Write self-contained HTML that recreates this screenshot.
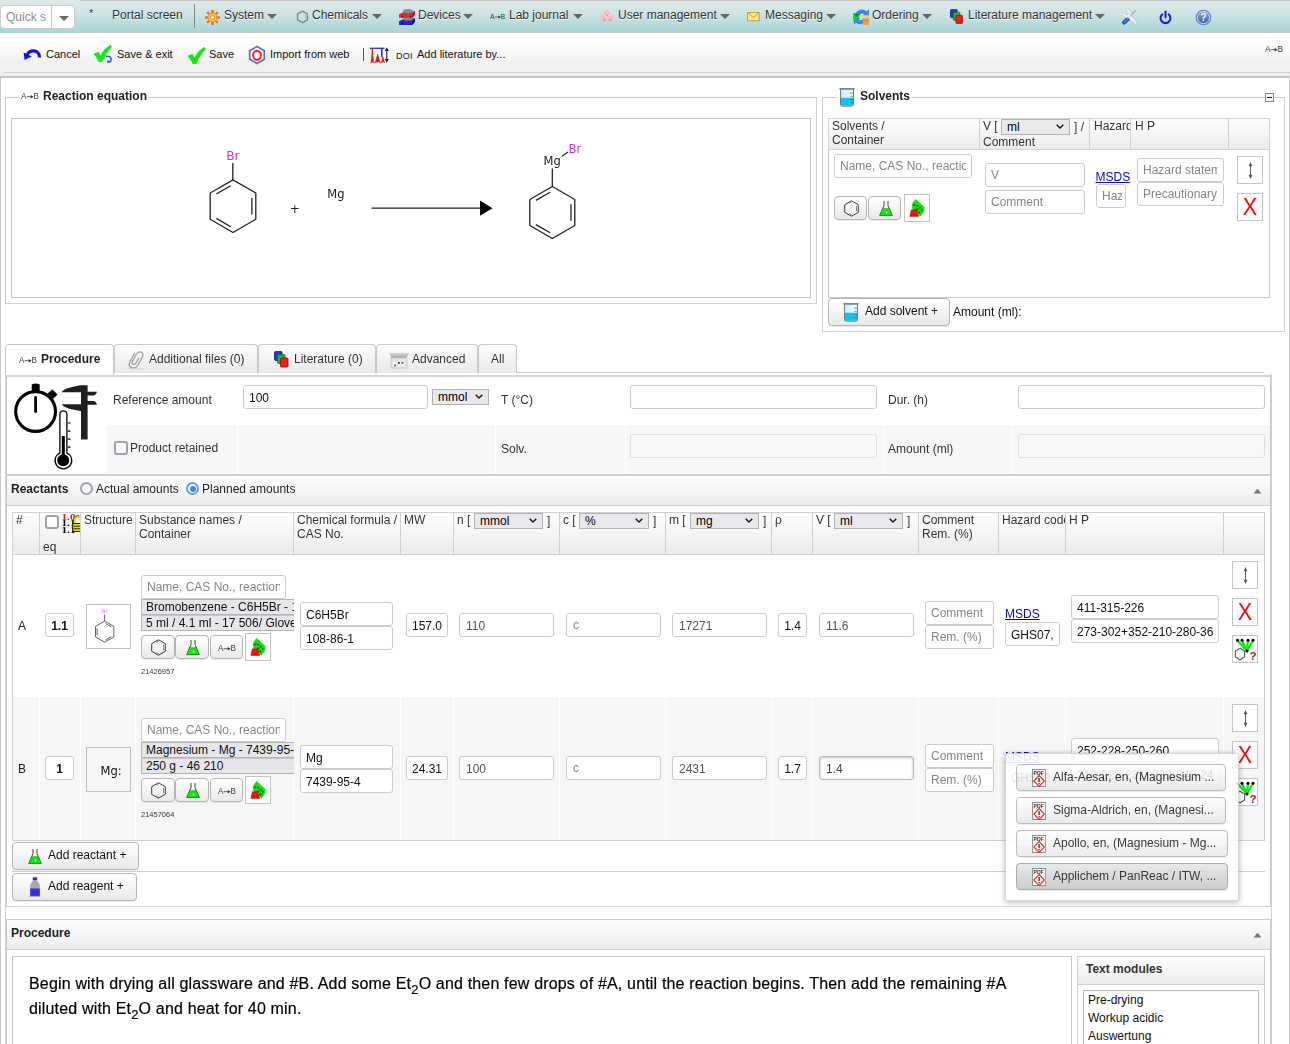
<!DOCTYPE html>
<html lang="en">
<head>
<meta charset="utf-8">
<title>Lab journal</title>
<style>
*{box-sizing:border-box;margin:0;padding:0}
html,body{width:1290px;height:1044px;overflow:hidden;background:#fff}
body{position:relative;font-family:"Liberation Sans",Arial,sans-serif;font-size:12px;color:#222;line-height:14px}
.abs{position:absolute}
.t{position:absolute;white-space:nowrap}
/* top nav */
#nav{position:absolute;left:0;top:0;width:1290px;height:33px;background:linear-gradient(#dfeaea 0%,#cfe3e3 40%,#a6d5d6 100%)}
#navline{position:absolute;left:80px;top:0;width:1210px;height:33px;border-top:1px solid #c4c4c4;border-bottom:1px solid #c9c9c9}
#navitems .t{top:8px;font-size:12px;color:#333;text-shadow:0 1px 0 rgba(255,255,255,.85)}
.caret{position:absolute;top:14px;width:0;height:0;border-left:5px solid transparent;border-right:5px solid transparent;border-top:5px solid #666}
#qs{position:absolute;left:0;top:5px;width:75px;height:24px;background:#fff;border:1px solid #ccc;border-radius:4px}
/* toolbar */
#tb{position:absolute;left:0;top:33px;width:1290px;height:44px;background:linear-gradient(#ffffff 0%,#fbfbfb 30%,#f1f1f1 65%,#eeeeee 100%)}
#tb .t{top:14px;font-size:11px;color:#111}
/* generic */
.inp{position:absolute;height:23px;border:1px solid #ccc;border-radius:3px;background:#fff;font-size:12px;line-height:21px;padding:1px 5px 0 5px;white-space:nowrap;overflow:hidden;color:#222}
.inp.ph{padding-top:0}
.inp .v{display:block;overflow:hidden;height:100%}
.ph{color:#858585}
.btn{position:absolute;border:1px solid #b4b4b4;border-radius:4px;background:linear-gradient(#ffffff,#e9e9e9);box-shadow:0 1px 0 rgba(0,0,0,.08)}
.sel{position:absolute;height:16px;border:1px solid #b2b2b2;background:#e9e9ed;font-size:12px;line-height:14px;padding-left:5px;color:#000}
.sel svg{position:absolute;right:5px;top:5px}
.ibox{position:absolute;border:1px solid #c8c8c8;background:#fff}
.hdr{position:absolute;background:linear-gradient(#fdfdfd,#ececec);border:1px solid #d3d3d3}
.th{position:absolute;top:0;height:100%;border-left:1px solid #d0d0d0;padding:0 0 0 3px;font-size:12px;line-height:14px;color:#333;overflow:hidden;white-space:nowrap}
a.msds{position:absolute;color:#0000ee;text-decoration:underline;font-size:12px}
</style>
</head>
<body><div id="wrap" style="position:absolute;left:0;top:0;width:1290px;height:1044px;overflow:hidden;opacity:0.9999">
<!-- NAV -->
<div id="nav"></div><div id="navline"></div>
<div id="qs"><span class="t ph" style="left:5px;top:4px;font-size:12px;color:#8c8c8c">Quick s</span><span class="abs" style="left:50px;top:0;width:1px;height:22px;background:#ccc"></span><span class="caret" style="left:58px;top:10px"></span></div>
<div id="navitems" class="abs" style="left:0;top:0"><span class="t" style="left:89px;top:6px;font-size:11px">*</span><span class="t" style="left:112px">Portal screen</span><span class="abs" style="left:194px;top:4px;width:1px;height:24px;background:#7d8c8c"></span><svg class="abs" style="left:205.400px;top:10px" width="15" height="15" viewBox="0 0 15 15"><defs><radialGradient id="gg" cx="0.5" cy="0.5" r="0.5"><stop offset="0" stop-color="#fff27a"/><stop offset="0.45" stop-color="#ffd21e"/><stop offset="0.75" stop-color="#ff8a10"/><stop offset="1" stop-color="#dc3c08"/></radialGradient></defs><path d="M6.65 0.35L8.35 0.35L8.24 3.26L9.97 3.98L11.96 1.85L13.15 3.04L11.02 5.03L11.74 6.76L14.65 6.65L14.65 8.35L11.74 8.24L11.02 9.97L13.15 11.96L11.96 13.15L9.97 11.02L8.24 11.74L8.35 14.65L6.65 14.65L6.76 11.74L5.03 11.02L3.04 13.15L1.85 11.96L3.98 9.97L3.26 8.24L0.35 8.35L0.35 6.65L3.26 6.76L3.98 5.03L1.85 3.04L3.04 1.85L5.03 3.98L6.76 3.26Z" fill="url(#gg)" stroke="#e05a10" stroke-width="0.6" stroke-linejoin="round"/><circle cx="7.5" cy="7.5" r="2" fill="#fff4f4" stroke="#f07010" stroke-width="0.9"/></svg><span class="t" style="left:224px">System</span><span class="caret" style="left:267px;top:14px"></span><svg class="abs" style="left:296px;top:10px" width="13" height="14" viewBox="0 0 14 15"><path d="M7 1.200L12.300 4.200V10.500L7 13.600L1.700 10.500V4.200Z" fill="none" stroke="#7d8a8a" stroke-width="1.500"/><path d="M10.300 5.300V9.500" stroke="#9aa" stroke-width="0.800"/></svg><span class="t" style="left:312px">Chemicals</span><span class="caret" style="left:372px;top:14px"></span><svg class="abs" style="left:398px;top:8px" width="18" height="18" viewBox="398 8 18 18"><path d="M399 21.300L403 19.300L415 18.300V21.500L412.300 25H399Z" fill="#2020e8"/><path d="M412.300 21.500L415 18.300V21.500L412.300 25Z" fill="#1010a8"/><ellipse cx="408" cy="19.300" rx="4.600" ry="2" fill="#5c5c5c"/><ellipse cx="408" cy="18.700" rx="4.600" ry="1.600" fill="#858585"/><path d="M399 14.300L403 12.200L415 11V14.200L412.300 18H399Z" fill="#f02828"/><path d="M412.300 14.500L415 11V14.200L412.300 18Z" fill="#b81010"/><ellipse cx="408" cy="12" rx="4.900" ry="2.600" fill="#555"/><ellipse cx="408" cy="11.200" rx="4.900" ry="2.200" fill="#8c8c8c"/><circle cx="402.300" cy="16.200" r="0.750" fill="#300"/><circle cx="410.600" cy="16.200" r="0.750" fill="#300"/><circle cx="402.300" cy="23.400" r="0.750" fill="#003"/><circle cx="410.600" cy="23.400" r="0.750" fill="#003"/></svg><span class="t" style="left:418px">Devices</span><span class="caret" style="left:463px;top:14px"></span><svg class="abs" style="left:490px;top:13px" width="16.0" height="8.0" viewBox="0 0 16 8"><text x="0" y="6.300" font-family="Liberation Sans,sans-serif" font-size="7" fill="#3a3a3a">A</text><path d="M4.800 4H9.500" stroke="#555" stroke-width="0.800"/><path d="M8.300 2.500L10.800 4L8.300 5.500Z" fill="#333"/><text x="10.600" y="6.300" font-family="Liberation Sans,sans-serif" font-size="7" fill="#3a3a3a">B</text></svg><span class="t" style="left:509px">Lab journal</span><span class="caret" style="left:573px;top:14px"></span><svg class="abs" style="left:600px;top:9px" width="16" height="15" viewBox="600 9 16 15"><g fill="#fcc3c7"><circle cx="606.900" cy="13.600" r="3.500"/><circle cx="603.800" cy="18.400" r="3.700"/><circle cx="610.300" cy="18.400" r="3.700"/></g><g fill="#8a6a70"><circle cx="605.500" cy="13.400" r="0.450"/><circle cx="608.300" cy="13.400" r="0.450"/><circle cx="607.300" cy="15.500" r="0.500"/><circle cx="603.400" cy="17.500" r="0.450"/><circle cx="611.400" cy="17.500" r="0.450"/></g><path d="M603 20H606M608.500 20H611.500" stroke="#a88088" stroke-width="0.900"/></svg><span class="t" style="left:618px">User management</span><span class="caret" style="left:720px;top:14px"></span><svg class="abs" style="left:747px;top:12px" width="13" height="9.500" viewBox="0 0 15 11"><rect x="0.700" y="0.700" width="13.400" height="9.400" fill="#fbe88a" stroke="#b59a1c" stroke-width="1"/><path d="M1 1L7.400 6.300L13.800 1" fill="none" stroke="#b59a1c" stroke-width="1"/></svg><span class="t" style="left:765px">Messaging</span><span class="caret" style="left:826px;top:14px"></span><svg class="abs" style="left:852px;top:8px" width="18" height="18" viewBox="852 8 18 18"><path d="M866 19.500C864 24.300 858.500 24.800 856 22.200L854.300 23.800V18.300H859.800L858.200 19.900C859.600 21.300 862.300 21 863.400 19Z" fill="#2f8cf0" stroke="#1b5aa8" stroke-width="0.500"/><path d="M853 13.300L862.300 12.500L853.400 22Z" fill="#00e400"/><path d="M855 14.500L858 14L856 17ZM857.500 16.500L859.500 15L858 18Z" fill="#067a06"/><path d="M855.800 13.800C857.800 9.300 864 8.800 866.600 12L868.600 9.800V16.200H862.300L864.500 14.100C863 12.500 860 12.500 858.600 14.800Z" fill="#2f8cf0" stroke="#1b5aa8" stroke-width="0.500"/><rect x="862.800" y="16.500" width="6.200" height="8.500" fill="#e9a23c"/><rect x="861.800" y="15.300" width="7.200" height="2.800" fill="#f6cf96"/><path d="M862.800 20.500H869" stroke="#c8821a" stroke-width="0.800"/></svg><span class="t" style="left:872px">Ordering</span><span class="caret" style="left:922px;top:14px"></span><svg class="abs" style="left:950px;top:9px" width="13.5" height="15.3" viewBox="0 0 15 17"><rect x="0.500" y="0.500" width="7.500" height="9" rx="1" fill="#1f35d8" stroke="#0b1a80" stroke-width="0.800"/><rect x="3.500" y="3.500" width="7.500" height="9" rx="1" fill="#1fb52a" stroke="#0c6a12" stroke-width="0.800"/><rect x="6.500" y="7" width="7.500" height="9" rx="1" fill="#ee1c1c" stroke="#8a0b0b" stroke-width="0.800"/></svg><span class="t" style="left:968px">Literature management</span><span class="caret" style="left:1095px;top:14px"></span><svg class="abs" style="left:1121.500px;top:9px" width="16" height="16" viewBox="0 0 16 16"><path d="M7 8L13.300 1.800" stroke="#9db2d2" stroke-width="1.700" stroke-linecap="round"/><path d="M12.300 1.300L14 0.800L14.500 2.800" fill="#b8c8e0"/><path d="M2.200 13.600L6.600 9.200" stroke="#2f62b4" stroke-width="4.300" stroke-linecap="round"/><path d="M2.600 12.800L6 9.400" stroke="#5a8ad8" stroke-width="1.200" stroke-linecap="round"/><path d="M6.800 6.600L13.200 13.300" stroke="#b4b4b4" stroke-width="4" stroke-linecap="round"/><path d="M6.800 6.600L13.200 13.300" stroke="#ececec" stroke-width="3" stroke-linecap="round"/><path d="M5.600 1.200A3.200 3.200 0 1 1 1.400 5.300" fill="none" stroke="#bdbdbd" stroke-width="3.200" stroke-linecap="round"/><path d="M5.600 1.200A3.200 3.200 0 1 1 1.400 5.300" fill="none" stroke="#f2f2f2" stroke-width="2.200" stroke-linecap="round"/></svg><svg class="abs" style="left:1157.500px;top:9.500px" width="15" height="16" viewBox="0 0 16 17"><path d="M4.600 4.600a5.300 5.300 0 1 0 6.800 0" fill="none" stroke="#1b1be6" stroke-width="2.200" stroke-linecap="round"/><path d="M8 1.500V8" stroke="#1b1be6" stroke-width="2.200" stroke-linecap="round"/></svg><svg class="abs" style="left:1194.500px;top:8.500px" width="17" height="17" viewBox="0 0 18 18"><defs><linearGradient id="hg" x1="0" y1="0" x2="0" y2="1"><stop offset="0" stop-color="#8aa6d8"/><stop offset="1" stop-color="#3a5ca6"/></linearGradient></defs><circle cx="9" cy="9" r="8.300" fill="#6482c0"/><circle cx="9" cy="9" r="6.500" fill="url(#hg)" stroke="#e4ecf8" stroke-width="0.900"/><text x="9" y="13" text-anchor="middle" font-family="Liberation Sans,sans-serif" font-weight="bold" font-size="11" fill="#f2f6fc">?</text></svg></div>
<!-- TOOLBAR -->
<div id="tb"><span class="abs" style="left:4px;top:39px;width:1286px;height:1px;background:#d4d4d4"></span><svg class="abs" style="left:22px;top:13px" width="22" height="16" viewBox="22 46 22 16"><path d="M39.500 57.500C39.500 53 36.500 50.800 33.300 50.800C30.500 50.800 28.300 52.300 27.300 54.600" fill="none" stroke="#1010ee" stroke-width="3.200"/><path d="M23.600 52.500L31.800 56.600L24.600 60Z" fill="#1010ee"/></svg><span class="t" style="left:46px">Cancel</span><svg class="abs" style="left:93px;top:12px" width="21" height="18" viewBox="0 0 21 18"><path d="M0.500 9.300C2.200 7.800 4 7.200 5.600 7C6.400 8.300 7 9.500 7.500 10.800C10 5.800 13.300 2.200 17.300 0C17.900 0.700 18.400 1.400 18.800 2.300C15 6 11.800 11 9.800 16.400C8.600 16.900 7 17.100 5.600 17.100C4.600 14 2.800 11.200 0.500 9.300Z" fill="#12ea12"/></svg><svg class="abs" style="left:104px;top:22px" width="9" height="9" viewBox="0 0 10 10"><path d="M2 1.500C5 0.500 8 2 8 5C8 6.500 7 7.800 5.500 8.300" fill="none" stroke="#1a4fe0" stroke-width="1.500"/><path d="M7 6.500L4 9.500L3.500 6z" fill="#1a4fe0"/></svg><span class="t" style="left:117px">Save &amp; exit</span><svg class="abs" style="left:187px;top:14px" width="21" height="18" viewBox="0 0 21 18"><path d="M0.500 9.300C2.200 7.800 4 7.200 5.600 7C6.400 8.300 7 9.500 7.500 10.800C10 5.800 13.300 2.200 17.300 0C17.900 0.700 18.400 1.400 18.800 2.300C15 6 11.800 11 9.800 16.400C8.600 16.900 7 17.100 5.600 17.100C4.600 14 2.800 11.200 0.500 9.300Z" fill="#12ea12"/></svg><span class="t" style="left:209px">Save</span><svg class="abs" style="left:247px;top:12px" width="20" height="20" viewBox="0 0 20 20"><path d="M10 1.600L17.300 5.800V14.200L10 18.400L2.700 14.200V5.800Z" fill="#fff" stroke="#5872ba" stroke-width="1.700"/><ellipse cx="10" cy="10.300" rx="3.900" ry="4.500" fill="#fff" stroke="#ff1c1c" stroke-width="2"/></svg><span class="t" style="left:270px">Import from web</span><span class="abs" style="left:363px;top:15px;width:1px;height:13px;background:#555"></span><svg class="abs" style="left:369px;top:13px" width="21" height="18" viewBox="369 46 21 18"><path d="M370 48.300H384.500" stroke="#2a2aff" stroke-width="1.300"/><path d="M381.800 48V57" stroke="#2a2aff" stroke-width="1.600"/><path d="M370 62.300H371.500L372.300 48.500L373.300 62.300H375.500L376.500 59L377.700 54.500L378.800 59L379.500 62.300H381.800L382.800 57L384 62.300H385" fill="#ee1111" stroke="#ee1111" stroke-width="0.900" stroke-linejoin="round"/><path d="M386.800 49V61" stroke="#222" stroke-width="1.100"/><path d="M384.800 51L386.800 47.300L388.800 51ZM384.800 59L386.800 62.700L388.800 59Z" fill="#222"/></svg><span class="t" style="left:396px;top:16px;font-size:9px;letter-spacing:0.300px">DOI</span><span class="t" style="left:417px">Add literature by...</span><svg class="abs" style="left:1265px;top:12px" width="18.7" height="9.4" viewBox="0 0 16 8"><text x="0" y="6.300" font-family="Liberation Sans,sans-serif" font-size="7" fill="#3a3a3a">A</text><path d="M4.800 4H9.500" stroke="#555" stroke-width="0.800"/><path d="M8.300 2.500L10.800 4L8.300 5.500Z" fill="#333"/><text x="10.600" y="6.300" font-family="Liberation Sans,sans-serif" font-size="7" fill="#3a3a3a">B</text></svg></div>
<div id="content"><div class="abs" style="left:0px;top:76px;width:1290px;height:980px;border:1px solid #c9c9c9;border-top:2px solid #c4c4c4"></div>
<div class="abs" style="left:5px;top:97px;width:812px;height:207px;border:1px solid #d0d0d0"></div><div class="abs" style="left:20px;top:90px;width:128px;height:14px;background:#fff"></div><svg class="abs" style="left:21px;top:92px" width="18.7" height="9.4" viewBox="0 0 16 8"><text x="0" y="6.300" font-family="Liberation Sans,sans-serif" font-size="7" fill="#3a3a3a">A</text><path d="M4.800 4H9.500" stroke="#555" stroke-width="0.800"/><path d="M8.300 2.500L10.800 4L8.300 5.500Z" fill="#333"/><text x="10.600" y="6.300" font-family="Liberation Sans,sans-serif" font-size="7" fill="#3a3a3a">B</text></svg><span class="t" style="left:43px;top:89px;font-weight:bold;font-size:12px;color:#222">Reaction equation</span><div class="abs" style="left:11px;top:118px;width:800px;height:180px;border:1px solid #c4c4c4"></div><svg class="abs" style="left:11px;top:118px" width="800" height="180" viewBox="11 118 800 180"><path d="M233.0 179.9 L255.8 193.0 L255.8 219.3 L233.0 232.5 L210.2 219.3 L210.2 193.0Z" fill="none" stroke="#222" stroke-width="1.3" stroke-linejoin="round"/><path d="M251.9 197.9L251.9 214.5" stroke="#222" stroke-width="1.3"/><path d="M230.7 226.7L216.4 218.4" stroke="#222" stroke-width="1.3"/><path d="M216.4 194.0L230.7 185.7" stroke="#222" stroke-width="1.3"/><path d="M232.800 180V163" stroke="#222" stroke-width="1.300"/><text x="226.300" y="159.600" font-family="DejaVu Sans,sans-serif" font-size="12" fill="#cc33cc">Br</text><text x="289.800" y="212.600" font-family="DejaVu Sans,sans-serif" font-size="12" fill="#222">+</text><text x="327.300" y="197.800" font-family="DejaVu Sans,sans-serif" font-size="11.500" fill="#222">Mg</text><path d="M371.500 208.200H481" stroke="#222" stroke-width="1.300"/><path d="M480 200.600L492.500 208.200L480 215.800Z" fill="#000"/><path d="M552.3 186.5 L574.8 199.5 L574.8 225.5 L552.3 238.5 L529.8 225.5 L529.8 199.5Z" fill="none" stroke="#222" stroke-width="1.3" stroke-linejoin="round"/><path d="M571.0 204.3L571.0 220.7" stroke="#222" stroke-width="1.3"/><path d="M550.1 232.8L535.9 224.6" stroke="#222" stroke-width="1.3"/><path d="M535.9 200.4L550.1 192.2" stroke="#222" stroke-width="1.3"/><path d="M552.300 186.600V168.500" stroke="#222" stroke-width="1.300"/><text x="543.500" y="165" font-family="DejaVu Sans,sans-serif" font-size="11.500" fill="#222">Mg</text><path d="M562 156.200L568 152" stroke="#222" stroke-width="1.300"/><text x="568.600" y="152.800" font-family="DejaVu Sans,sans-serif" font-size="11.500" fill="#cc33cc">Br</text></svg>
<div class="abs" style="left:822px;top:97px;width:463px;height:235px;border:1px solid #d0d0d0"></div><div class="abs" style="left:837px;top:88px;width:74px;height:16px;background:#fff"></div><svg class="abs" style="left:839px;top:88px" width="16" height="19" viewBox="0 0 16 19"><defs><linearGradient id="bk839" x1="0" x2="1"><stop offset="0" stop-color="#c8eef4"/><stop offset="1" stop-color="#f2fcfd"/></linearGradient></defs><path d="M1.500 1V16.500Q1.500 18.200 3.200 18.200H12.800Q14.500 18.200 14.500 16.500V1Z" fill="url(#bk839)" stroke="#6a8088" stroke-width="1"/><path d="M2 9.800H14V16.500Q14 17.700 12.800 17.700H3.200Q2 17.700 2 16.500Z" fill="#10c2f8"/><path d="M0.300 0.800H15.700" stroke="#6a8088" stroke-width="1.300"/><path d="M11 5H14M11.500 8.300H13.800M11 11.500H14M11.500 14.500H13.800" stroke="#557078" stroke-width="0.800"/></svg><span class="t" style="left:860px;top:89px;font-weight:bold;color:#222">Solvents</span><div class="abs" style="left:1265px;top:93px;width:9px;height:9px;border:1px solid #888;background:#fff"></div><div class="abs" style="left:1267px;top:97px;width:5px;height:1px;background:#000"></div><div class="abs" style="left:828px;top:118px;width:442px;height:180px;border:1px solid #c8c8c8"></div><div class="hdr" style="left:828px;top:118px;width:442px;height:32px"><div class="th" style="left:-1px;width:151px;border-left:none;padding-left:4px">Solvents /<br>Container</div><div class="th" style="left:150px;width:110px">V [</div><div class="th" style="left:260px;width:41px;padding-left:4px">Hazard cod</div><div class="th" style="left:301px;width:98px;padding-left:4px">H P</div><div class="th" style="left:399px;width:41px"></div></div><div class="sel" style="left:1001px;top:119px;width:69px;height:16px;line-height:14px;">ml<svg width="8" height="5" viewBox="0 0 8 5" style="top:4px"><path d="M0.700 0.700L4 4L7.300 0.700" fill="none" stroke="#111" stroke-width="1.300"/></svg></div><span class="t" style="left:1074px;top:120px;color:#333">] /</span><span class="t" style="left:983px;top:135px;color:#333">Comment</span><div class="inp ph" style="left:834px;top:154px;width:138px;height:24px;line-height:22px;font-size:12px"><span class="v">Name, CAS No., reaction</span></div><div class="btn" style="left:834px;top:196px;width:33px;height:24px;"><svg class="abs" style="left:9px;top:3px" width="15" height="17" viewBox="0 0 15 17"><path d="M7.500 0.800L14.300 4.700V12.300L7.500 16.200L0.700 12.300V4.700Z" fill="none" stroke="#3a3a3a" stroke-width="1"/><path d="M12.500 5.800V11.200M5.500 3.200L7.500 2M5.500 13.800L7.500 15" stroke="#666" stroke-width="0.800"/></svg></div><div class="btn" style="left:868px;top:196px;width:33px;height:24px;"><svg class="abs" style="left:9.5px;top:2.5px" width="14" height="17" viewBox="0 0 14 17"><path d="M5 1V5.500L0.800 15.500H13.200L9 5.500V1" fill="none" stroke="#333" stroke-width="0.900"/><path d="M3.600 8.700H10.400L13.200 15.600H0.800Z" fill="#10e810" stroke="#0a9a0a" stroke-width="0.600"/><circle cx="7.500" cy="12.500" r="1" fill="#dfffdf"/></svg></div><div class="abs" style="left:904px;top:194px;width:26px;height:28px;border:1px solid #c4c4c4;background:#fff"><svg class="abs" style="left:0;top:0" width="24" height="26" viewBox="0 0 24 26"><path d="M10.500 4.100L19.600 12.300L19.100 16.800L15.500 21.400L7.100 13.600L7.200 8.400Z" fill="#0fe30f"/><path d="M7.800 9.500H10.500V11H7.800ZM11 10.500L12.500 9.500L13.500 11L12 12ZM13.500 12.500L15 11.500L16 13L14.500 14ZM12 13L13.500 14.500L12.500 16L11 14.500ZM15.500 14.500L17 13.500L18 15L16.500 16ZM14 16L15.500 17L14.500 19L13 17.500Z" fill="#0a6a0a"/><path d="M6.400 14.700H11.300L13.800 21.400H4.800Z" fill="#f50a0a" stroke="#a01010" stroke-width="0.500"/><circle cx="9" cy="17.500" r="0.800" fill="none" stroke="#d05050" stroke-width="0.400"/></svg></div><div class="inp ph" style="left:985px;top:163px;width:100px;height:24px;line-height:22px;font-size:12px"><span class="v">V</span></div><div class="inp ph" style="left:985px;top:190px;width:100px;height:24px;line-height:22px;font-size:12px"><span class="v">Comment</span></div><a class="msds" style="left:1095.500px;top:170px">MSDS</a><div class="inp ph" style="left:1096px;top:184px;width:30px;height:24px;line-height:22px;font-size:12px;padding-left:5px;padding-right:3px"><span class="v">Haz</span></div><div class="inp ph" style="left:1137px;top:158px;width:87px;height:24px;line-height:22px;font-size:12px"><span class="v">Hazard statem</span></div><div class="inp ph" style="left:1137px;top:182px;width:87px;height:24px;line-height:22px;font-size:12px"><span class="v">Precautionary</span></div><div class="abs" style="left:1237px;top:156px;width:26px;height:28px;border:1px solid #c4c4c4;background:#fff"><svg class="abs" style="left:7.500px;top:4px" width="9" height="19" viewBox="0 0 9 19"><path d="M4.500 3V16" stroke="#666" stroke-width="1"/><path d="M2.600 5.200L4.500 1L6.400 5.200ZM2.600 13.800L4.500 18L6.400 13.800Z" fill="#555"/></svg></div><div class="abs" style="left:1237px;top:193px;width:26px;height:28px;border:1px solid #c4c4c4;background:#fff"><span class="t" style="left:0;top:0;width:24px;text-align:center;font-size:23px;line-height:27px;color:#ff0000;transform:scaleX(0.940)">X</span></div><div class="btn" style="left:828px;top:298px;width:122px;height:28px;"><svg class="abs" style="left:14px;top:4px" width="16" height="19" viewBox="0 0 16 19"><defs><linearGradient id="bk14" x1="0" x2="1"><stop offset="0" stop-color="#c8eef4"/><stop offset="1" stop-color="#f2fcfd"/></linearGradient></defs><path d="M1.500 1V16.500Q1.500 18.200 3.200 18.200H12.800Q14.500 18.200 14.500 16.500V1Z" fill="url(#bk14)" stroke="#6a8088" stroke-width="1"/><path d="M2 9.800H14V16.500Q14 17.700 12.800 17.700H3.200Q2 17.700 2 16.500Z" fill="#10c2f8"/><path d="M0.300 0.800H15.700" stroke="#6a8088" stroke-width="1.300"/><path d="M11 5H14M11.500 8.300H13.800M11 11.500H14M11.500 14.500H13.800" stroke="#557078" stroke-width="0.800"/></svg><span class="t" style="left:36px;top:5px;color:#111">Add solvent +</span></div><span class="t" style="left:953px;top:305px;color:#111">Amount (ml):</span>
<div class="abs" style="left:6px;top:372px;width:1258px;height:1px;background:#c8c8c8"></div><div class="abs" style="left:5px;top:344px;width:109px;border-radius:4px 4px 0 0;background:#fff;border:1px solid #c8c8c8;border-bottom:none;height:32px"><div class="abs" style="left:0;top:1px"><svg class="abs" style="left:13px;top:10px" width="18.7" height="9.4" viewBox="0 0 16 8"><text x="0" y="6.300" font-family="Liberation Sans,sans-serif" font-size="7" fill="#3a3a3a">A</text><path d="M4.800 4H9.500" stroke="#555" stroke-width="0.800"/><path d="M8.300 2.500L10.800 4L8.300 5.500Z" fill="#333"/><text x="10.600" y="6.300" font-family="Liberation Sans,sans-serif" font-size="7" fill="#3a3a3a">B</text></svg><span class="t" style="left:35px;top:6px;font-weight:bold;color:#222">Procedure</span></div></div><div class="abs" style="left:114px;top:344px;width:144px;border-radius:4px 4px 0 0;background:linear-gradient(#fcfcfc,#e9e9e9);border:1px solid #c8c8c8;border-bottom:none;height:29px"><div class="abs" style="left:0;top:1px"><svg class="abs" style="left:12px;top:4px" width="18" height="20" viewBox="128 350 18 20"><path d="M135.500 353.300L130.600 362.500C129.200 365.500 131 368 134.500 368.200C136.500 368.200 137.800 367 138.800 365.300L143.400 357C144.800 354.200 143.500 351.800 141 351.800C139.300 351.800 138.200 352.800 137.300 354.300L133.500 361.300C132.700 363 133.300 364.300 134.900 364.300C135.800 364.300 136.500 363.600 137 362.800L139.800 358.200" fill="none" stroke="#9c9c9c" stroke-width="1.250" stroke-linecap="round"/><path d="M129 368.800H145" stroke="#cfcfcf" stroke-width="0.800"/></svg><span class="t" style="left:34px;top:6px;color:#333">Additional files (0)</span></div></div><div class="abs" style="left:258px;top:344px;width:118px;border-radius:4px 4px 0 0;background:linear-gradient(#fcfcfc,#e9e9e9);border:1px solid #c8c8c8;border-bottom:none;height:29px"><div class="abs" style="left:0;top:1px"><svg class="abs" style="left:14.5px;top:4.5px" width="15.0" height="17.0" viewBox="0 0 15 17"><rect x="0.500" y="0.500" width="7.500" height="9" rx="1" fill="#1f35d8" stroke="#0b1a80" stroke-width="0.800"/><rect x="3.500" y="3.500" width="7.500" height="9" rx="1" fill="#1fb52a" stroke="#0c6a12" stroke-width="0.800"/><rect x="6.500" y="7" width="7.500" height="9" rx="1" fill="#ee1c1c" stroke="#8a0b0b" stroke-width="0.800"/></svg><span class="t" style="left:35px;top:6px;color:#333">Literature (0)</span></div></div><div class="abs" style="left:376px;top:344px;width:102px;border-radius:4px 4px 0 0;background:linear-gradient(#fcfcfc,#e9e9e9);border:1px solid #c8c8c8;border-bottom:none;height:29px"><div class="abs" style="left:0;top:1px"><svg class="abs" style="left:11px;top:6px" width="22" height="17" viewBox="388 352 22 17"><defs><linearGradient id="adv" x1="0" y1="0" x2="0" y2="1"><stop offset="0" stop-color="#d6d6d6"/><stop offset="1" stop-color="#a8a8a8"/></linearGradient></defs><path d="M389 353H409L406.500 358H391.500Z" fill="url(#adv)"/><path d="M391 358H407V368H391Z" fill="#e6e6e6" stroke="#c2c2c2" stroke-width="0.800"/><rect x="394.200" y="362" width="1.700" height="1.700" fill="#fff"/><rect x="398" y="362" width="1.700" height="1.700" fill="#222"/><rect x="401.600" y="362" width="1.700" height="1.700" fill="#444"/><rect x="394.200" y="364.600" width="1.700" height="1.700" fill="#3a6068"/><rect x="398" y="364.600" width="1.700" height="1.700" fill="#fff"/><rect x="401.600" y="364.600" width="1.700" height="1.700" fill="#fff"/></svg><span class="t" style="left:35px;top:6px;color:#333">Advanced</span></div></div><div class="abs" style="left:478px;top:344px;width:39px;border-radius:4px 4px 0 0;background:linear-gradient(#fcfcfc,#e9e9e9);border:1px solid #c8c8c8;border-bottom:none;height:29px"><div class="abs" style="left:0;top:1px"><span class="t" style="left:12px;top:6px;color:#333">All</span></div></div><div class="abs" style="left:6px;top:375px;width:1265px;height:532px;border:1px solid #c8c8c8;border-top:2px solid #d4d4d4"></div><div class="abs" style="left:5px;top:374px;width:1px;height:680px;background:#d2d2d2"></div><div class="abs" style="left:1271px;top:374px;width:1px;height:680px;background:#d2d2d2"></div><svg class="abs" style="left:8px;top:378px" width="100" height="96" viewBox="8 378 100 96">
<circle cx="35.600" cy="411.500" r="19.900" fill="#fff" stroke="#000" stroke-width="3.100"/>
<path d="M31.700 392V384.500Q35.700 382.500 39.700 384.500V392Z" fill="#000"/>
<path d="M47.500 393.500L52.500 389.500L57.500 394.500L53 399Z" fill="#000"/>
<path d="M35.600 397.500V411.500" stroke="#000" stroke-width="2.800" stroke-linecap="round"/>
<path d="M61.800 392.300C62.500 389.500 70 386.800 80.500 385.200H87.600V391.800H97C96.300 394 95 395.500 93.500 395.500H87.600V401H93.500C95 401 96.300 402.500 97 404.700H87.600V439.400H81V411C72 409.500 63.500 408 61.800 404.300H81V392.300Z" fill="#231f20"/>
<path d="M59.900 414.300a3.500 3.500 0 0 1 7 0V453a8.300 8.300 0 1 1 -7 0Z" fill="#fff" stroke="#000" stroke-width="1.300"/>
<circle cx="63.200" cy="460.300" r="6" fill="#000"/><rect x="61.800" y="436" width="3" height="20" fill="#000"/>
<path d="M67.700 423H70.500M67.700 431.100H70.500M67.700 439.100H70.500M67.700 447.100H70.500" stroke="#000" stroke-width="1.100"/>
</svg><div class="abs" style="left:107px;top:425px;width:130px;height:48px;background:#f6f6f6"></div><div class="abs" style="left:238px;top:425px;width:257px;height:48px;background:#f6f6f6"></div><div class="abs" style="left:496px;top:425px;width:129px;height:48px;background:#f6f6f6"></div><div class="abs" style="left:626px;top:425px;width:257px;height:48px;background:#f6f6f6"></div><div class="abs" style="left:884px;top:425px;width:128px;height:48px;background:#f6f6f6"></div><div class="abs" style="left:1013px;top:425px;width:257px;height:48px;background:#f6f6f6"></div><span class="t" style="left:113px;top:393px;color:#333">Reference amount</span><div class="inp" style="left:243px;top:385px;width:185px;height:24px;line-height:22px;color:#111"><span class="v">100</span></div><div class="sel" style="left:432px;top:389px;width:57px;height:16px;line-height:14px;">mmol<svg width="8" height="5" viewBox="0 0 8 5" style="top:4px"><path d="M0.700 0.700L4 4L7.300 0.700" fill="none" stroke="#111" stroke-width="1.300"/></svg></div><span class="t" style="left:501px;top:393px;color:#333">T (°C)</span><div class="inp" style="left:630px;top:385px;width:247px;height:24px;line-height:22px;"><span class="v"></span></div><span class="t" style="left:888px;top:393px;color:#333">Dur. (h)</span><div class="inp" style="left:1018px;top:385px;width:247px;height:24px;line-height:22px;"><span class="v"></span></div><div class="abs" style="left:114px;top:441px;width:14px;height:14px;border:2px solid #a0a0b0;border-radius:3px;background:#fff"></div><span class="t" style="left:130px;top:441px;color:#333">Product retained</span><span class="t" style="left:501px;top:442px;color:#333">Solv.</span><div class="inp" style="left:630px;top:434px;width:247px;height:24px;line-height:22px;background:#f7f7f7;border-color:#dedede"><span class="v"></span></div><span class="t" style="left:888px;top:442px;color:#333">Amount (ml)</span><div class="inp" style="left:1018px;top:434px;width:247px;height:24px;line-height:22px;background:#f7f7f7;border-color:#dedede"><span class="v"></span></div><div class="hdr" style="left:7px;top:474px;width:1263px;height:32px;border-left:none;border-right:none;border-color:#cfcfcf;border-top-width:2px"></div><span class="t" style="left:11px;top:482px;font-weight:bold;color:#222">Reactants</span><div class="abs" style="left:80px;top:482px;width:13px;height:13px;border:2px solid #a0a0b0;border-radius:50%;background:#fff"></div><span class="t" style="left:96px;top:482px;color:#222">Actual amounts</span><div class="abs" style="left:186px;top:482px;width:13px;height:13px;border:2px solid #5b9bea;border-radius:50%;background:#fff"></div><div class="abs" style="left:189.5px;top:485.5px;width:6px;height:6px;border-radius:50%;background:#3b86e8"></div><span class="t" style="left:202px;top:482px;color:#222">Planned amounts</span><svg class="abs" style="left:1253px;top:488px" width="9" height="6" viewBox="0 0 9 6"><path d="M0.500 5.500L4.500 0.800L8.500 5.500Z" fill="#777"/></svg>
<div class="hdr" style="left:12px;top:512px;width:1253px;height:43px;border-color:#d0d0d0"><div class="th" style="left:-1px;width:27px;border-left:none;padding-left:4px;">#</div><div class="th" style="left:26px;width:41px;"></div><div class="th" style="left:67px;width:55px;">Structure</div><div class="th" style="left:122px;width:158px;">Substance names /<br>Container</div><div class="th" style="left:280px;width:107px;">Chemical formula /<br>CAS No.</div><div class="th" style="left:387px;width:53px;">MW</div><div class="th" style="left:440px;width:106px;">n [</div><div class="th" style="left:546px;width:106px;">c [</div><div class="th" style="left:652px;width:106px;">m [</div><div class="th" style="left:758px;width:41px;">ρ</div><div class="th" style="left:799px;width:106px;">V [</div><div class="th" style="left:905px;width:80px;">Comment<br>Rem. (%)</div><div class="th" style="left:985px;width:67px;">Hazard code</div><div class="th" style="left:1052px;width:158px;">H P</div><div class="th" style="left:1210px;width:41px;"></div></div><div class="abs" style="left:12px;top:553px;width:1253px;height:288px;border:1px solid #d0d0d0;border-top:none"></div><div class="abs" style="left:45px;top:515px;width:14px;height:14px;border:2px solid #a0a0b0;border-radius:3px;background:#fff"></div><svg class="abs" style="left:61px;top:513px" width="19" height="21" viewBox="61 513 19 21"><g font-family="Liberation Serif,serif" font-weight="bold" font-size="8.500"><text x="61.500" y="519.800" fill="#ee1111" textLength="14" lengthAdjust="spacingAndGlyphs">1.0</text><text x="61.500" y="526" fill="#000" textLength="14" lengthAdjust="spacingAndGlyphs">1.1</text><text x="61.500" y="532.500" fill="#000" textLength="14" lengthAdjust="spacingAndGlyphs">1.1</text></g><path d="M74.500 524V520.500Q74.500 516.800 78.500 516.800H80" fill="none" stroke="#e8d800" stroke-width="2.400"/><path d="M74.500 524V520.500Q74.500 516.800 78.500 516.800H80" fill="none" stroke="#222" stroke-width="0.700" transform="translate(-1.100,-1.100)"/><rect x="72.800" y="523.500" width="8" height="8" fill="#f0e000" stroke="#111" stroke-width="0.900"/><path d="M73.500 526.200H80M73.500 528.800H80" stroke="#111" stroke-width="0.900"/></svg><span class="t" style="left:43px;top:540px;color:#333">eq</span><div class="sel" style="left:474px;top:513px;width:69px;height:16px;line-height:14px;">mmol<svg width="8" height="5" viewBox="0 0 8 5" style="top:4px"><path d="M0.700 0.700L4 4L7.300 0.700" fill="none" stroke="#111" stroke-width="1.300"/></svg></div><span class="t" style="left:547px;top:514px;color:#333">]</span><div class="sel" style="left:579px;top:513px;width:70px;height:16px;line-height:14px;">%<svg width="8" height="5" viewBox="0 0 8 5" style="top:4px"><path d="M0.700 0.700L4 4L7.300 0.700" fill="none" stroke="#111" stroke-width="1.300"/></svg></div><span class="t" style="left:653px;top:514px;color:#333">]</span><div class="sel" style="left:690px;top:513px;width:69px;height:16px;line-height:14px;">mg<svg width="8" height="5" viewBox="0 0 8 5" style="top:4px"><path d="M0.700 0.700L4 4L7.300 0.700" fill="none" stroke="#111" stroke-width="1.300"/></svg></div><span class="t" style="left:763px;top:514px;color:#333">]</span><div class="sel" style="left:834px;top:513px;width:69px;height:16px;line-height:14px;">ml<svg width="8" height="5" viewBox="0 0 8 5" style="top:4px"><path d="M0.700 0.700L4 4L7.300 0.700" fill="none" stroke="#111" stroke-width="1.300"/></svg></div><span class="t" style="left:907px;top:514px;color:#333">]</span><span class="t" style="left:18px;top:619px;color:#222">A</span><div class="inp" style="left:45px;top:613px;width:29px;height:24px;line-height:22px;padding-left:0;padding-right:0;text-align:center;color:#111;font-weight:bold;font-size:12px"><span class="v">1.1</span></div><div class="abs" style="left:86px;top:604px;width:45px;height:45px;border:1px solid #c0c0c0"><svg class="abs" style="left:0;top:0" width="43" height="43" viewBox="0 0 43 43"><path d="M17.6 16.1 L26.8 21.4 L26.8 32.0 L17.6 37.2 L8.5 32.0 L8.5 21.4Z" fill="none" stroke="#444" stroke-width="0.85" stroke-linejoin="round"/><path d="M18.6 18.5L24.3 21.8" stroke="#444" stroke-width="0.85"/><path d="M24.3 31.6L18.6 34.9" stroke="#444" stroke-width="0.85"/><path d="M10.1 30.0L10.1 23.4" stroke="#444" stroke-width="0.85"/><path d="M17.650 16.200V9.500" stroke="#444" stroke-width="0.850"/><text x="15" y="8.100" font-family="DejaVu Sans,sans-serif" font-size="5" fill="#dd66dd">Br</text></svg></div><div class="inp ph" style="left:141px;top:575px;width:145px;height:24px;line-height:22px;font-size:12px"><span class="v">Name, CAS No., reaction</span></div><div class="abs" style="left:141px;top:599px;width:153px;height:32px;overflow:hidden"><div class="abs" style="left:0;top:0;width:170px;height:16px;background:#e6e6ea;border:1px solid #b4b4b4;font-size:12px;line-height:14px;padding-left:4px;white-space:nowrap;color:#111">Bromobenzene - C6H5Br - 108-86-1</div><div class="abs" style="left:0;top:16px;width:170px;height:16px;background:#e6e6ea;border:1px solid #b4b4b4;border-top-color:#c8c8c8;font-size:12px;line-height:14px;padding-left:4px;white-space:nowrap;color:#111">5 ml / 4.1 ml - 17 506/ Glovebox</div></div><div class="btn" style="left:141px;top:635px;width:33.5px;height:24px;"><svg class="abs" style="left:9px;top:3px" width="15" height="17" viewBox="0 0 15 17"><path d="M7.500 0.800L14.300 4.700V12.300L7.500 16.200L0.700 12.300V4.700Z" fill="none" stroke="#3a3a3a" stroke-width="1"/><path d="M12.500 5.800V11.200M5.500 3.200L7.500 2M5.500 13.800L7.500 15" stroke="#666" stroke-width="0.800"/></svg></div><div class="btn" style="left:175.4px;top:635px;width:33.3px;height:24px;"><svg class="abs" style="left:9.5px;top:2.5px" width="14" height="17" viewBox="0 0 14 17"><path d="M5 1V5.500L0.800 15.500H13.200L9 5.500V1" fill="none" stroke="#333" stroke-width="0.900"/><path d="M3.600 8.700H10.400L13.200 15.600H0.800Z" fill="#10e810" stroke="#0a9a0a" stroke-width="0.600"/><circle cx="7.500" cy="12.500" r="1" fill="#dfffdf"/></svg></div><div class="btn" style="left:209.7px;top:635px;width:33.3px;height:24px;"><svg class="abs" style="left:7px;top:8px" width="18.7" height="9.4" viewBox="0 0 16 8"><text x="0" y="6.300" font-family="Liberation Sans,sans-serif" font-size="7" fill="#3a3a3a">A</text><path d="M4.800 4H9.500" stroke="#555" stroke-width="0.800"/><path d="M8.300 2.500L10.800 4L8.300 5.500Z" fill="#333"/><text x="10.600" y="6.300" font-family="Liberation Sans,sans-serif" font-size="7" fill="#3a3a3a">B</text></svg></div><div class="abs" style="left:245px;top:633px;width:26px;height:28px;border:1px solid #c4c4c4;background:#fff"><svg class="abs" style="left:0;top:0" width="24" height="26" viewBox="0 0 24 26"><path d="M10.500 4.100L19.600 12.300L19.100 16.800L15.500 21.400L7.100 13.600L7.200 8.400Z" fill="#0fe30f"/><path d="M7.800 9.500H10.500V11H7.800ZM11 10.500L12.500 9.500L13.500 11L12 12ZM13.500 12.500L15 11.500L16 13L14.500 14ZM12 13L13.500 14.500L12.500 16L11 14.500ZM15.500 14.500L17 13.500L18 15L16.500 16ZM14 16L15.500 17L14.500 19L13 17.500Z" fill="#0a6a0a"/><path d="M6.400 14.700H11.300L13.800 21.400H4.800Z" fill="#f50a0a" stroke="#a01010" stroke-width="0.500"/><circle cx="9" cy="17.500" r="0.800" fill="none" stroke="#d05050" stroke-width="0.400"/></svg></div><span class="t" style="left:141px;top:667px;font-size:7.500px;line-height:9px;color:#333">21426957</span><div class="inp" style="left:300px;top:602px;width:93px;height:24px;line-height:22px;font-size:12px;color:#111"><span class="v">C6H5Br</span></div><div class="inp" style="left:300px;top:626px;width:93px;height:24px;line-height:22px;font-size:12px;color:#111"><span class="v">108-86-1</span></div><div class="inp" style="left:406px;top:613px;width:42px;height:24px;line-height:22px;padding-left:0;padding-right:0;text-align:center;font-size:12px;color:#111"><span class="v">157.0</span></div><div class="inp" style="left:459px;top:613px;width:95px;height:24px;line-height:22px;font-size:12px;color:#555;padding-left:6px"><span class="v">110</span></div><div class="inp ph" style="left:566px;top:613px;width:95px;height:24px;line-height:22px;font-size:12px;padding-left:6px"><span class="v">c</span></div><div class="inp" style="left:672px;top:613px;width:95px;height:24px;line-height:22px;font-size:12px;color:#555;padding-left:6px"><span class="v">17271</span></div><div class="inp" style="left:778px;top:613px;width:29px;height:24px;line-height:22px;padding-left:0;padding-right:0;text-align:center;font-size:12px;color:#111"><span class="v">1.4</span></div><div class="inp" style="left:819px;top:613px;width:95px;height:24px;line-height:22px;font-size:12px;color:#555;padding-left:6px"><span class="v">11.6</span></div><div class="inp ph" style="left:925px;top:601px;width:69px;height:24px;line-height:22px;font-size:12px"><span class="v">Comment</span></div><div class="inp ph" style="left:925px;top:625px;width:69px;height:24px;line-height:22px;font-size:12px"><span class="v">Rem. (%)</span></div><a class="msds" style="left:1005px;top:607px">MSDS</a><div class="inp" style="left:1005px;top:622px;width:55px;height:24px;line-height:22px;font-size:12px;color:#111"><span class="v">GHS07,</span></div><div class="inp" style="left:1071px;top:595px;width:148px;height:24px;line-height:22px;font-size:12px;color:#111"><span class="v">411-315-226</span></div><div class="inp" style="left:1071px;top:619px;width:148px;height:24px;line-height:22px;font-size:12px;color:#111"><span class="v">273-302+352-210-280-36</span></div><div class="abs" style="left:1232px;top:561px;width:26px;height:28px;border:1px solid #c4c4c4;background:#fff"><svg class="abs" style="left:7.500px;top:4px" width="9" height="19" viewBox="0 0 9 19"><path d="M4.500 3V16" stroke="#666" stroke-width="1"/><path d="M2.600 5.200L4.500 1L6.400 5.200ZM2.600 13.800L4.500 18L6.400 13.800Z" fill="#555"/></svg></div><div class="abs" style="left:1232px;top:598px;width:26px;height:28px;border:1px solid #c4c4c4;background:#fff"><span class="t" style="left:0;top:0;width:24px;text-align:center;font-size:23px;line-height:27px;color:#ff0000;transform:scaleX(0.940)">X</span></div><div class="abs" style="left:1232px;top:635px;width:26px;height:28px;border:1px solid #c4c4c4;background:#fff"><svg class="abs" style="left:0;top:0" width="24" height="26" viewBox="0 0 24 26"><path d="M4.500 4.500L14 15M9 4.500L14 15M15 4.500L14 15M20 4.500L14 15" stroke="#12e812" stroke-width="2.200"/><circle cx="4.500" cy="4.300" r="1.500"/><circle cx="9" cy="4.300" r="1.500"/><circle cx="15" cy="4.300" r="1.500"/><circle cx="20" cy="4.300" r="1.500"/><circle cx="14" cy="15" r="1.500"/><path d="M7 12.300L11.600 15V21L7 23.800L2.400 21V15Z" fill="none" stroke="#555" stroke-width="1.100"/><text x="16.500" y="24" font-family="Liberation Sans,sans-serif" font-weight="bold" font-size="11.500" fill="#b01515">?</text></svg></div><div class="abs" style="left:13px;top:697px;width:26px;height:143px;background:#f6f6f6"></div><div class="abs" style="left:40px;top:697px;width:40px;height:143px;background:#f6f6f6"></div><div class="abs" style="left:81px;top:697px;width:54px;height:143px;background:#f6f6f6"></div><div class="abs" style="left:136px;top:697px;width:157px;height:143px;background:#f6f6f6"></div><div class="abs" style="left:294px;top:697px;width:106px;height:143px;background:#f6f6f6"></div><div class="abs" style="left:401px;top:697px;width:52px;height:143px;background:#f6f6f6"></div><div class="abs" style="left:454px;top:697px;width:105px;height:143px;background:#f6f6f6"></div><div class="abs" style="left:560px;top:697px;width:105px;height:143px;background:#f6f6f6"></div><div class="abs" style="left:666px;top:697px;width:105px;height:143px;background:#f6f6f6"></div><div class="abs" style="left:772px;top:697px;width:40px;height:143px;background:#f6f6f6"></div><div class="abs" style="left:813px;top:697px;width:105px;height:143px;background:#f6f6f6"></div><div class="abs" style="left:919px;top:697px;width:79px;height:143px;background:#f6f6f6"></div><div class="abs" style="left:999px;top:697px;width:66px;height:143px;background:#f6f6f6"></div><div class="abs" style="left:1066px;top:697px;width:157px;height:143px;background:#f6f6f6"></div><div class="abs" style="left:1224px;top:697px;width:40px;height:143px;background:#f6f6f6"></div><span class="t" style="left:18px;top:762px;color:#222">B</span><div class="inp" style="left:45px;top:756px;width:29px;height:24px;line-height:22px;padding-left:0;padding-right:0;text-align:center;color:#111;font-weight:bold;font-size:12px"><span class="v">1</span></div><div class="abs" style="left:86px;top:747px;width:45px;height:45px;border:1px solid #c0c0c0"><span class="t" style="left:13.500px;top:15.500px;font-family:'DejaVu Sans',sans-serif;font-size:11.500px;color:#111">Mg:</span></div><div class="inp ph" style="left:141px;top:718px;width:145px;height:24px;line-height:22px;font-size:12px"><span class="v">Name, CAS No., reaction</span></div><div class="abs" style="left:141px;top:742px;width:153px;height:32px;overflow:hidden"><div class="abs" style="left:0;top:0;width:170px;height:16px;background:#e6e6ea;border:1px solid #b4b4b4;font-size:12px;line-height:14px;padding-left:4px;white-space:nowrap;color:#111">Magnesium - Mg - 7439-95-4</div><div class="abs" style="left:0;top:16px;width:170px;height:16px;background:#e6e6ea;border:1px solid #b4b4b4;border-top-color:#c8c8c8;font-size:12px;line-height:14px;padding-left:4px;white-space:nowrap;color:#111">250 g - 46 210</div></div><div class="btn" style="left:141px;top:778px;width:33.5px;height:24px;"><svg class="abs" style="left:9px;top:3px" width="15" height="17" viewBox="0 0 15 17"><path d="M7.500 0.800L14.300 4.700V12.300L7.500 16.200L0.700 12.300V4.700Z" fill="none" stroke="#3a3a3a" stroke-width="1"/><path d="M12.500 5.800V11.200M5.500 3.200L7.500 2M5.500 13.800L7.500 15" stroke="#666" stroke-width="0.800"/></svg></div><div class="btn" style="left:175.4px;top:778px;width:33.3px;height:24px;"><svg class="abs" style="left:9.5px;top:2.5px" width="14" height="17" viewBox="0 0 14 17"><path d="M5 1V5.500L0.800 15.500H13.200L9 5.500V1" fill="none" stroke="#333" stroke-width="0.900"/><path d="M3.600 8.700H10.400L13.200 15.600H0.800Z" fill="#10e810" stroke="#0a9a0a" stroke-width="0.600"/><circle cx="7.500" cy="12.500" r="1" fill="#dfffdf"/></svg></div><div class="btn" style="left:209.7px;top:778px;width:33.3px;height:24px;"><svg class="abs" style="left:7px;top:8px" width="18.7" height="9.4" viewBox="0 0 16 8"><text x="0" y="6.300" font-family="Liberation Sans,sans-serif" font-size="7" fill="#3a3a3a">A</text><path d="M4.800 4H9.500" stroke="#555" stroke-width="0.800"/><path d="M8.300 2.500L10.800 4L8.300 5.500Z" fill="#333"/><text x="10.600" y="6.300" font-family="Liberation Sans,sans-serif" font-size="7" fill="#3a3a3a">B</text></svg></div><div class="abs" style="left:245px;top:776px;width:26px;height:28px;border:1px solid #c4c4c4;background:#fff"><svg class="abs" style="left:0;top:0" width="24" height="26" viewBox="0 0 24 26"><path d="M10.500 4.100L19.600 12.300L19.100 16.800L15.500 21.400L7.100 13.600L7.200 8.400Z" fill="#0fe30f"/><path d="M7.800 9.500H10.500V11H7.800ZM11 10.500L12.500 9.500L13.500 11L12 12ZM13.500 12.500L15 11.500L16 13L14.500 14ZM12 13L13.500 14.500L12.500 16L11 14.500ZM15.500 14.500L17 13.500L18 15L16.500 16ZM14 16L15.500 17L14.500 19L13 17.500Z" fill="#0a6a0a"/><path d="M6.400 14.700H11.300L13.800 21.400H4.800Z" fill="#f50a0a" stroke="#a01010" stroke-width="0.500"/><circle cx="9" cy="17.500" r="0.800" fill="none" stroke="#d05050" stroke-width="0.400"/></svg></div><span class="t" style="left:141px;top:810px;font-size:7.500px;line-height:9px;color:#333">21457064</span><div class="inp" style="left:300px;top:745px;width:93px;height:24px;line-height:22px;font-size:12px;color:#111"><span class="v">Mg</span></div><div class="inp" style="left:300px;top:769px;width:93px;height:24px;line-height:22px;font-size:12px;color:#111"><span class="v">7439-95-4</span></div><div class="inp" style="left:406px;top:756px;width:42px;height:24px;line-height:22px;padding-left:0;padding-right:0;text-align:center;font-size:12px;color:#111"><span class="v">24.31</span></div><div class="inp" style="left:459px;top:756px;width:95px;height:24px;line-height:22px;font-size:12px;color:#555;padding-left:6px"><span class="v">100</span></div><div class="inp ph" style="left:566px;top:756px;width:95px;height:24px;line-height:22px;font-size:12px;padding-left:6px"><span class="v">c</span></div><div class="inp" style="left:672px;top:756px;width:95px;height:24px;line-height:22px;font-size:12px;color:#555;padding-left:6px"><span class="v">2431</span></div><div class="inp" style="left:778px;top:756px;width:29px;height:24px;line-height:22px;padding-left:0;padding-right:0;text-align:center;font-size:12px;color:#111"><span class="v">1.7</span></div><div class="inp" style="left:819px;top:756px;width:95px;height:24px;line-height:22px;font-size:12px;color:#555;padding-left:6px;border-color:#b8b8b8;box-shadow:inset 0 1px 3px rgba(0,0,0,.24);color:#444"><span class="v">1.4</span></div><div class="inp ph" style="left:925px;top:744px;width:69px;height:24px;line-height:22px;font-size:12px"><span class="v">Comment</span></div><div class="inp ph" style="left:925px;top:768px;width:69px;height:24px;line-height:22px;font-size:12px"><span class="v">Rem. (%)</span></div><a class="msds" style="left:1005px;top:750px">MSDS</a><div class="inp" style="left:1005px;top:765px;width:55px;height:24px;line-height:22px;font-size:12px;color:#111"><span class="v">GHS02</span></div><div class="inp" style="left:1071px;top:738px;width:148px;height:24px;line-height:22px;font-size:12px;color:#111"><span class="v">252-228-250-260</span></div><div class="inp" style="left:1071px;top:762px;width:148px;height:24px;line-height:22px;font-size:12px;color:#111"><span class="v">210-223-231+232-240-241-37</span></div><div class="abs" style="left:1232px;top:704px;width:26px;height:28px;border:1px solid #c4c4c4;background:#fff"><svg class="abs" style="left:7.500px;top:4px" width="9" height="19" viewBox="0 0 9 19"><path d="M4.500 3V16" stroke="#666" stroke-width="1"/><path d="M2.600 5.200L4.500 1L6.400 5.200ZM2.600 13.800L4.500 18L6.400 13.800Z" fill="#555"/></svg></div><div class="abs" style="left:1232px;top:741px;width:26px;height:28px;border:1px solid #c4c4c4;background:#fff"><span class="t" style="left:0;top:0;width:24px;text-align:center;font-size:23px;line-height:27px;color:#ff0000;transform:scaleX(0.940)">X</span></div><div class="abs" style="left:1232px;top:778px;width:26px;height:28px;border:1px solid #c4c4c4;background:#fff"><svg class="abs" style="left:0;top:0" width="24" height="26" viewBox="0 0 24 26"><path d="M4.500 4.500L14 15M9 4.500L14 15M15 4.500L14 15M20 4.500L14 15" stroke="#12e812" stroke-width="2.200"/><circle cx="4.500" cy="4.300" r="1.500"/><circle cx="9" cy="4.300" r="1.500"/><circle cx="15" cy="4.300" r="1.500"/><circle cx="20" cy="4.300" r="1.500"/><circle cx="14" cy="15" r="1.500"/><path d="M7 12.300L11.600 15V21L7 23.800L2.400 21V15Z" fill="none" stroke="#555" stroke-width="1.100"/><text x="16.500" y="24" font-family="Liberation Sans,sans-serif" font-weight="bold" font-size="11.500" fill="#b01515">?</text></svg></div><div class="btn" style="left:12px;top:842px;width:127px;height:28px;"><svg class="abs" style="left:14.5px;top:4.5px" width="14" height="17" viewBox="0 0 14 17"><path d="M5 1V5.500L0.800 15.500H13.200L9 5.500V1" fill="none" stroke="#333" stroke-width="0.900"/><path d="M3.600 8.700H10.400L13.200 15.600H0.800Z" fill="#10e810" stroke="#0a9a0a" stroke-width="0.600"/><circle cx="7.500" cy="12.500" r="1" fill="#dfffdf"/></svg><span class="t" style="left:35px;top:5px;color:#111">Add reactant +</span></div><div class="abs" style="left:12px;top:871px;width:1253px;height:1px;background:#d0d0d0"></div><div class="btn" style="left:12px;top:873px;width:125px;height:28px;"><svg class="abs" style="left:16px;top:3px" width="12" height="20" viewBox="0 0 12 20"><rect x="3.800" y="0.300" width="4.400" height="3.200" rx="0.800" fill="#2b2bd6"/><path d="M4 3.500L1.200 7.500V19H10.800V7.500L8 3.500Z" fill="#a9a9ad"/><path d="M1.200 11.500H10.800V19H1.200Z" fill="#3434d4"/><path d="M0.500 19.300H11.500" stroke="#8a8aa8" stroke-width="0.800"/></svg><span class="t" style="left:35px;top:5px;color:#111">Add reagent +</span></div><div class="abs" style="left:12px;top:906px;width:1253px;height:1px;background:#d8d8d8"></div>
<div class="abs" style="left:1005px;top:753px;width:234px;height:148px;background:#fff;border:1px solid #d2d2d2;border-radius:2px;box-shadow:0 1px 6px rgba(0,0,0,.35);opacity:0.890"><div class="btn" style="left:10px;top:10px;width:210px;height:27px;"><svg class="abs" style="left:15px;top:4px" width="14.200" height="18" viewBox="0 0 15 18" preserveAspectRatio="none"><rect x="0.500" y="0.500" width="14" height="17" fill="#f4f4f4" stroke="#666" stroke-width="0.800"/><text x="1.500" y="6" font-family="Liberation Sans,sans-serif" font-weight="bold" font-size="5.500" fill="#222">PDF</text><path d="M7.500 6.500L13 12L7.500 17.500L2 12Z" fill="#fff" stroke="#e11" stroke-width="1.200"/><path d="M7.500 9V13" stroke="#111" stroke-width="1.300"/><circle cx="7.500" cy="14.800" r="0.800" fill="#111"/></svg><span class="t" style="left:36px;top:5px;color:#222">Alfa-Aesar, en, (Magnesium ...</span></div><div class="btn" style="left:10px;top:43px;width:210px;height:27px;"><svg class="abs" style="left:15px;top:4px" width="14.200" height="18" viewBox="0 0 15 18" preserveAspectRatio="none"><rect x="0.500" y="0.500" width="14" height="17" fill="#f4f4f4" stroke="#666" stroke-width="0.800"/><text x="1.500" y="6" font-family="Liberation Sans,sans-serif" font-weight="bold" font-size="5.500" fill="#222">PDF</text><path d="M7.500 6.500L13 12L7.500 17.500L2 12Z" fill="#fff" stroke="#e11" stroke-width="1.200"/><path d="M7.500 9V13" stroke="#111" stroke-width="1.300"/><circle cx="7.500" cy="14.800" r="0.800" fill="#111"/></svg><span class="t" style="left:36px;top:5px;color:#222">Sigma-Aldrich, en, (Magnesi...</span></div><div class="btn" style="left:10px;top:76px;width:212px;height:27px;"><svg class="abs" style="left:15px;top:4px" width="14.200" height="18" viewBox="0 0 15 18" preserveAspectRatio="none"><rect x="0.500" y="0.500" width="14" height="17" fill="#f4f4f4" stroke="#666" stroke-width="0.800"/><text x="1.500" y="6" font-family="Liberation Sans,sans-serif" font-weight="bold" font-size="5.500" fill="#222">PDF</text><path d="M7.500 6.500L13 12L7.500 17.500L2 12Z" fill="#fff" stroke="#e11" stroke-width="1.200"/><path d="M7.500 9V13" stroke="#111" stroke-width="1.300"/><circle cx="7.500" cy="14.800" r="0.800" fill="#111"/></svg><span class="t" style="left:36px;top:5px;color:#222">Apollo, en, (Magnesium - Mg...</span></div><div class="btn" style="left:10px;top:109px;width:212px;height:27px;background:linear-gradient(#e6e6e6,#c6c6c6);border-color:#a0a0a0"><svg class="abs" style="left:15px;top:4px" width="14.200" height="18" viewBox="0 0 15 18" preserveAspectRatio="none"><rect x="0.500" y="0.500" width="14" height="17" fill="#f4f4f4" stroke="#666" stroke-width="0.800"/><text x="1.500" y="6" font-family="Liberation Sans,sans-serif" font-weight="bold" font-size="5.500" fill="#222">PDF</text><path d="M7.500 6.500L13 12L7.500 17.500L2 12Z" fill="#fff" stroke="#e11" stroke-width="1.200"/><path d="M7.500 9V13" stroke="#111" stroke-width="1.300"/><circle cx="7.500" cy="14.800" r="0.800" fill="#111"/></svg><span class="t" style="left:36px;top:5px;color:#222">Applichem / PanReac / ITW, ...</span></div></div>
<div class="abs" style="left:6px;top:919px;width:1265px;height:130px;border:1px solid #c8c8c8"></div><div class="hdr" style="left:7px;top:919px;width:1263px;height:31px;border-left:none;border-right:none;border-color:#cfcfcf"></div><span class="t" style="left:11px;top:926px;font-weight:bold;color:#222">Procedure</span><svg class="abs" style="left:1253px;top:932px" width="9" height="6" viewBox="0 0 9 6"><path d="M0.500 5.500L4.500 0.800L8.500 5.500Z" fill="#777"/></svg><div class="abs" style="left:12px;top:956px;width:1060px;height:100px;border:1px solid #c8c8c8;background:#fff"></div><span class="t" style="left:29px;top:971px;font-family:'Liberation Sans',sans-serif;font-size:16px;line-height:25px;color:#000;letter-spacing:0.170px;-webkit-text-stroke:0.200px #000">Begin with drying all glassware and #B. Add some Et<span style="font-size:13px;position:relative;top:5px;line-height:0">2</span>O and then few drops of #A, until the reaction begins. Then add the remaining #A</span><span class="t" style="left:29px;top:996px;font-family:'Liberation Sans',sans-serif;font-size:16px;line-height:25px;color:#000;letter-spacing:0.170px;-webkit-text-stroke:0.200px #000">diluted with Et<span style="font-size:13px;position:relative;top:5px;line-height:0">2</span>O and heat for 40 min.</span><div class="abs" style="left:1077px;top:956px;width:188px;height:100px;border:1px solid #d0d0d0;background:#fff"></div><div class="hdr" style="left:1077px;top:956px;width:188px;height:29px;border-color:#d0d0d0"></div><span class="t" style="left:1086px;top:962px;font-weight:bold;color:#333">Text modules</span><div class="abs" style="left:1083px;top:990px;width:176px;height:70px;border:1px solid #b8b8b8;background:#fff"></div><span class="t" style="left:1088px;top:993px;color:#111;font-size:12px">Pre-drying</span><span class="t" style="left:1088px;top:1011px;color:#111;font-size:12px">Workup acidic</span><span class="t" style="left:1088px;top:1029px;color:#111;font-size:12px">Auswertung</span></div>
</div></body>
</html>
